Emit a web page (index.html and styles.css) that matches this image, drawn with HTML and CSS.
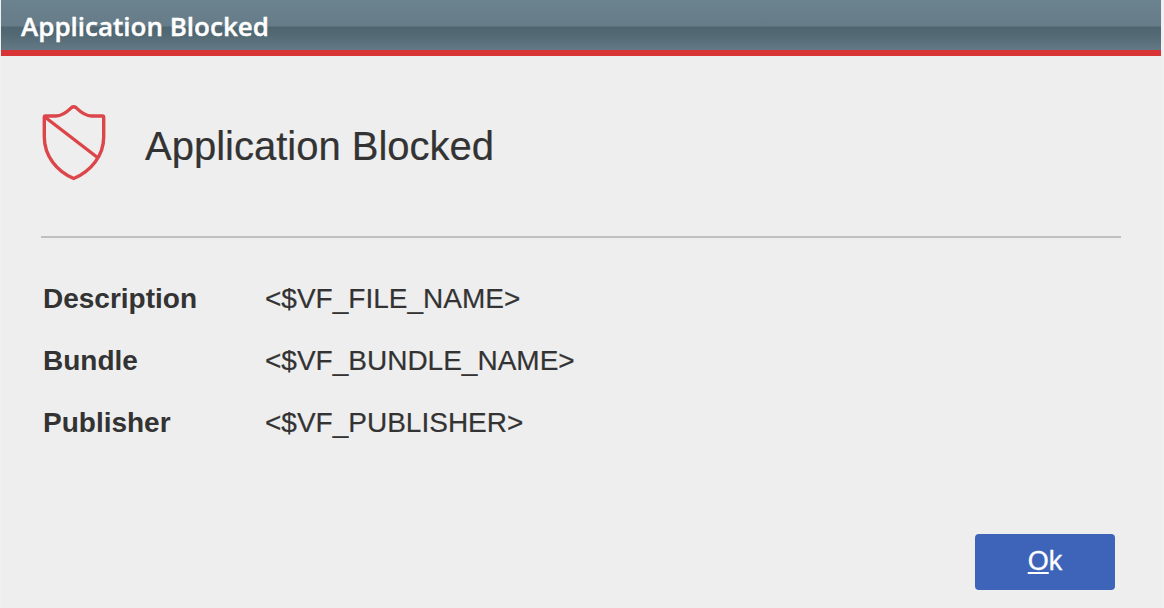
FILE: index.html
```html
<!DOCTYPE html>
<html lang="en">
<head>
<meta charset="utf-8">
<title>Application Blocked</title>
<link rel="stylesheet" href="styles.css">
</head>
<body>
<div class="dialog">
  <header class="titlebar"><span class="titlebar-text">Application Blocked</span></header>
  <main class="content">
    <div class="heading">
      <svg class="shield" width="66" height="78" viewBox="0 0 66 78" fill="none" stroke="#dc4549" stroke-width="3.4" stroke-linejoin="round" stroke-linecap="round">
        <path d="M30.5 3.6C26.5 7.5 21 12 15 12H4.5Q3.3 12 3.3 13.5V33C3.3 52 16 67.5 32.7 74.5C49.5 67.5 62.7 52 62.7 33V13.5Q62.7 12 61.5 12H50.5C44.5 12 39 7.5 35 3.6Q32.7 1.8 30.5 3.6Z"/>
        <path d="M4.5 13.5L56.5 53.5"/>
      </svg>
      <h1 class="heading-text">Application Blocked</h1>
    </div>
    <dl class="details">
      <dt>Description</dt><dd>&lt;$VF_FILE_NAME&gt;</dd>
      <dt>Bundle</dt><dd>&lt;$VF_BUNDLE_NAME&gt;</dd>
      <dt>Publisher</dt><dd>&lt;$VF_PUBLISHER&gt;</dd>
    </dl>
    <div class="actions">
      <button class="ok"><span class="accesskey">O</span>k</button>
    </div>
  </main>
</div>
</body>
</html>
```

FILE: styles.css
```css
* {
  box-sizing: border-box;
}

body {
  margin: 0;
  background: #f0f0f0;
  color: #333;
  font-family: "Liberation Sans", Arial, sans-serif;
}

.dialog {
  display: flex;
  flex-direction: column;
  width: 1160px;
  height: 608px;
  margin-left: 1px;
  background: #eee;
}

.titlebar {
  display: flex;
  align-items: center;
  height: 56px;
  padding: 0 20px;
  border-bottom: 6px solid #d83435;
  background: linear-gradient(#6b828f 0, #667c88 26px, #4f6570 27px, #526873 34px, #637985 50px);
}

.titlebar-text {
  margin-top: 1px;
  color: #fff;
  font: 600 26px/36px "Open Sans", sans-serif;
  -webkit-text-stroke: 0.4px #fff;
}

.content {
  display: flex;
  flex-direction: column;
  flex: 1;
  padding: 0 40px;
}

.heading {
  display: flex;
  height: 182px;
  padding-top: 48px;
  border-bottom: 2px solid #c0c0c0;
}

.shield {
  flex: none;
  filter: blur(0.4px);
}

.heading-text {
  margin: 19px 0 0 38px;
  font-size: 40px;
  line-height: 46px;
  font-weight: 400;
  -webkit-text-stroke: 0.2px #333;
}

.details {
  display: grid;
  grid-template-columns: 222px 1fr;
  grid-auto-rows: 62px;
  margin: 30px 0 0 2px;
  font-size: 28px;
  line-height: 62px;
}

.details dt {
  font-weight: 700;
}

.details dd {
  margin: 0;
  -webkit-text-stroke: 0.2px #333;
}

.actions {
  display: flex;
  justify-content: flex-end;
  margin-top: auto;
  padding: 0 6px 18px 0;
}

.ok {
  width: 140px;
  height: 56px;
  padding: 0 0 2px;
  border: 0;
  border-radius: 4px;
  background: #3d64b8;
  color: #fff;
  font: 27px/31px "Liberation Sans", Arial, sans-serif;
  -webkit-text-stroke: 0.3px #fff;
}

.accesskey {
  text-decoration: underline;
  text-decoration-thickness: 2px;
  text-underline-offset: 2px;
}
```
